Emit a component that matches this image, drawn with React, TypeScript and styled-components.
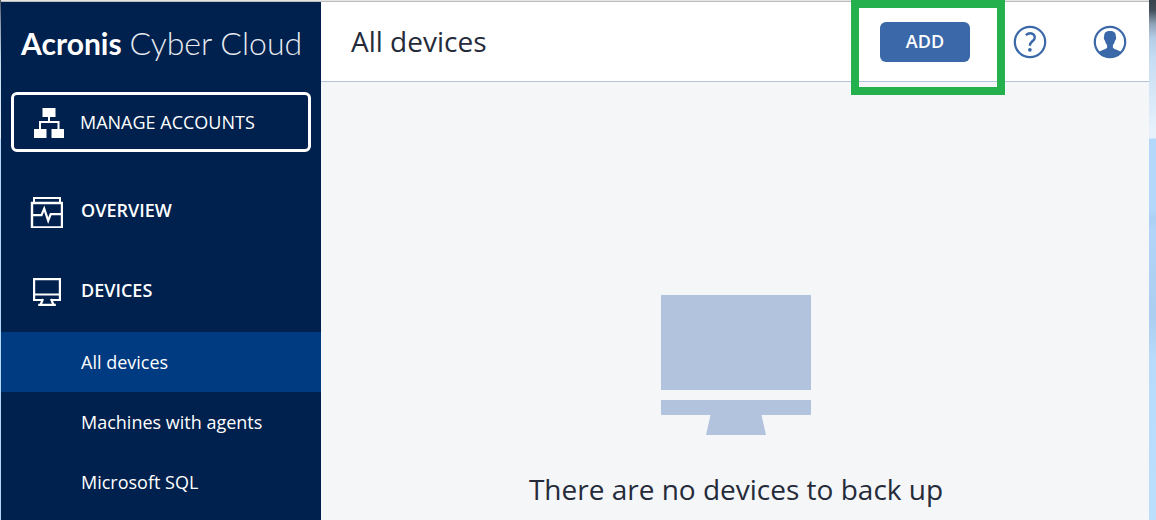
import React from 'react';
import styled, { createGlobalStyle, css } from 'styled-components';

const GlobalStyle = createGlobalStyle`
  *, *::before, *::after { box-sizing: border-box; }
  body {
    margin: 0;
    font-family: 'Open Sans', 'Noto Sans', sans-serif;
    font-size: 18px;
    line-height: 24px;
    color: #252b3a;
  }
`;

const Desktop = styled.div`
  display: grid;
  grid-template-columns: 1px minmax(0, 1fr) 7px;
  height: 100vh;
  overflow: hidden;
`;

const LeftEdge = styled.div`
  background: linear-gradient(#4a5560 0, #8d9aa6 24px, #c5dcf0 60px, #dfeefa 138px, #b4d8fc 139px);
`;

const RightEdge = styled.div`
  background: linear-gradient(
    #37424c 0,
    #414d58 10px,
    #8fa3b7 24px,
    #b4cde6 38px,
    #c5dcf2 58px,
    #e6f1fc 130px,
    #e6f1fc 138px,
    #b3d7fb 139px,
    #b3d7fb 210px,
    #abcff2 218px,
    #b1d4f8 230px,
    #abcef0 315px,
    #b8dbfb 360px,
    #bbdefd 520px
  );
`;

const Window = styled.div`
  display: grid;
  grid-template-columns: 320px minmax(0, 1fr);
  border-top: 1px solid #bcbcbc;
  margin-top: 1px;
  box-shadow: 0 -1px 0 #e6e6e6;
`;

const Sidebar = styled.aside`
  background: #00204d;
  color: #fff;
`;

const Logo = styled.a`
  display: flex;
  align-items: baseline;
  gap: 8px;
  height: 90px;
  padding: 21px 20px 0;
  color: #fff;
  font-family: Lato, sans-serif;
  font-size: 30px;
  line-height: 40px;
  white-space: nowrap;
  text-decoration: none;
`;

const Brand = styled.span`
  font-weight: 700;
`;

const Product = styled.span`
  font-size: 32px;
  font-weight: 300;
  color: #e6eaf0;
`;

const ManageButton = styled.button`
  display: flex;
  align-items: center;
  gap: 16px;
  width: 300px;
  height: 60px;
  margin: 0 10px 20px;
  padding: 0 20px;
  border: 3px solid #fff;
  border-radius: 6px;
  background: transparent;
  color: inherit;
  font: inherit;
  cursor: pointer;
`;

const NavLink = styled.a<{ $level: 'section' | 'item'; $active?: boolean }>`
  display: flex;
  align-items: center;
  color: inherit;
  text-decoration: none;
  ${({ $level }) =>
    $level === 'section'
      ? css`
          gap: 18px;
          height: 80px;
          padding: 0 28px 4px;
          font-weight: 600;
        `
      : css`
          height: 60px;
          padding: 0 80px;
          white-space: nowrap;
        `}
  background: ${({ $active }) => ($active ? '#003a80' : 'transparent')};
`;

const Main = styled.main`
  display: flex;
  flex-direction: column;
  background: #f4f6f8;
`;

const Header = styled.header`
  display: flex;
  align-items: center;
  justify-content: space-between;
  height: 80px;
  padding: 0 22px 0 30px;
  border-bottom: 1px solid #b2c4dc;
  background: #fff;
`;

const Title = styled.h1`
  margin: 0;
  padding-bottom: 2px;
  font-size: 28px;
  line-height: 38px;
  font-weight: 400;
`;

const Actions = styled.div`
  display: flex;
  align-items: center;
`;

const AddArea = styled.div`
  position: relative;
  margin-right: 43px;
`;

const AddButton = styled.button`
  display: block;
  width: 90px;
  height: 40px;
  padding: 0 0 2px;
  border: 0;
  border-radius: 6px;
  background: #3a68a8;
  color: #fff;
  font: inherit;
  font-weight: 600;
  cursor: pointer;
`;

const Highlight = styled.div`
  position: absolute;
  top: -22px;
  right: -35px;
  bottom: -33px;
  left: -29px;
  border: 8px solid #24b14d;
  pointer-events: none;
`;

const IconButton = styled.button`
  display: block;
  width: 34px;
  height: 34px;
  padding: 0;
  border: 0;
  background: none;
  color: #3a68a8;
  cursor: pointer;

  & + & {
    margin-left: 46px;
  }

  svg {
    display: block;
  }
`;

const EmptyState = styled.section`
  display: flex;
  flex-direction: column;
  align-items: center;
  gap: 35px;
  padding: 213px 0 0 2px;
`;

const Message = styled.p`
  margin: 0;
  font-size: 28px;
  line-height: 38px;
`;

const AccountsIcon = () => (
  <svg width="30" height="32" viewBox="0 -2 30 32" aria-hidden="true">
    <path d="M8.500 0h13v9h-13zM0 21h12.500v9H0zM17.500 21H30v9H17.500z" fill="#fff" />
    <path d="M15 9v5M6 21v-7h18.500v7" fill="none" stroke="#fff" strokeWidth="2" />
  </svg>
);

const OverviewIcon = () => (
  <svg width="34" height="36" viewBox="0 -5 34 36" fill="none" stroke="#fff" strokeWidth="2" aria-hidden="true">
    <path d="M5 5V1h26v4" />
    <path d="M3 6h30v24.500H3z" strokeWidth="2.400" />
    <path d="M3 18.200h9.500l2.700-6.500 4 12 2.500-6.500H33" strokeWidth="2.200" />
  </svg>
);

const DevicesIcon = () => (
  <svg width="34" height="34" viewBox="0 -5 34 34" fill="none" stroke="#fff" strokeWidth="2.200" aria-hidden="true">
    <path d="M13 22H5.100V1.100h25.800V22H23" />
    <path d="M5 16.500h26" strokeWidth="2" />
    <path d="M14 21l-2.500 5.800M22 21l2.500 5.800M9.200 26.800h17.600" />
  </svg>
);

const HelpIcon = () => (
  <svg width="34" height="34" viewBox="0 0 34 34" fill="none" stroke="currentColor" aria-hidden="true">
    <circle cx="17" cy="17" r="15.200" strokeWidth="2.200" />
    <path d="M12.800 10.200c2-1.700 4-2.200 5.800-1.700 2.700.7 3.800 3.200 2.800 5.400-1 2.200-4.600 3.100-4.600 6.900" strokeWidth="2.400" />
    <circle cx="16.900" cy="24.800" r="1.900" fill="currentColor" stroke="none" />
  </svg>
);

const UserIcon = () => (
  <svg width="34" height="34" viewBox="0 0 34 34" aria-hidden="true">
    <circle cx="17" cy="17" r="15.200" fill="none" stroke="currentColor" strokeWidth="2.200" />
    <path
      d="M17 6c3.900 0 6 1.800 5.800 5.300.8 1.600.3 3.600-.8 4.400-.5 2-1.200 3.300-2.100 4.400v2.600c1.600 2 5.400 2.200 8.400 4.300C25.800 30.700 21.600 32.500 17 32.500S8.200 30.700 5.700 27c3-2.100 6.800-2.300 8.400-4.300v-2.600c-.9-1.100-1.600-2.400-2.100-4.400-1.100-.8-1.600-2.800-.8-4.400C11 7.800 13.100 6 17 6z"
      fill="currentColor"
    />
  </svg>
);

const MonitorArt = () => (
  <svg width="150" height="140" viewBox="0 0 150 140" fill="#b2c3de" aria-hidden="true">
    <path d="M0 0h150v95H0zM0 105h150v15h-49.500l4.500 20H45l4.500-20H0z" />
  </svg>
);

export default function App() {
  return (
    <>
      <GlobalStyle />
      <Desktop>
        <LeftEdge />
        <Window>
          <Sidebar>
            <Logo href="#">
              <Brand>Acronis</Brand>
              <Product>Cyber Cloud</Product>
            </Logo>
            <ManageButton type="button">
              <AccountsIcon />
              MANAGE ACCOUNTS
            </ManageButton>
            <nav>
              <NavLink href="#" $level="section">
                <OverviewIcon />
                OVERVIEW
              </NavLink>
              <NavLink href="#" $level="section">
                <DevicesIcon />
                DEVICES
              </NavLink>
              <NavLink href="#" $level="item" $active aria-current="page">
                All devices
              </NavLink>
              <NavLink href="#" $level="item">
                Machines with agents
              </NavLink>
              <NavLink href="#" $level="item">
                Microsoft SQL
              </NavLink>
            </nav>
          </Sidebar>
          <Main>
            <Header>
              <Title>All devices</Title>
              <Actions>
                <AddArea>
                  <AddButton type="button">ADD</AddButton>
                  <Highlight />
                </AddArea>
                <IconButton type="button" aria-label="Help">
                  <HelpIcon />
                </IconButton>
                <IconButton type="button" aria-label="Account">
                  <UserIcon />
                </IconButton>
              </Actions>
            </Header>
            <EmptyState>
              <MonitorArt />
              <Message>There are no devices to back up</Message>
            </EmptyState>
          </Main>
        </Window>
        <RightEdge />
      </Desktop>
    </>
  );
}
